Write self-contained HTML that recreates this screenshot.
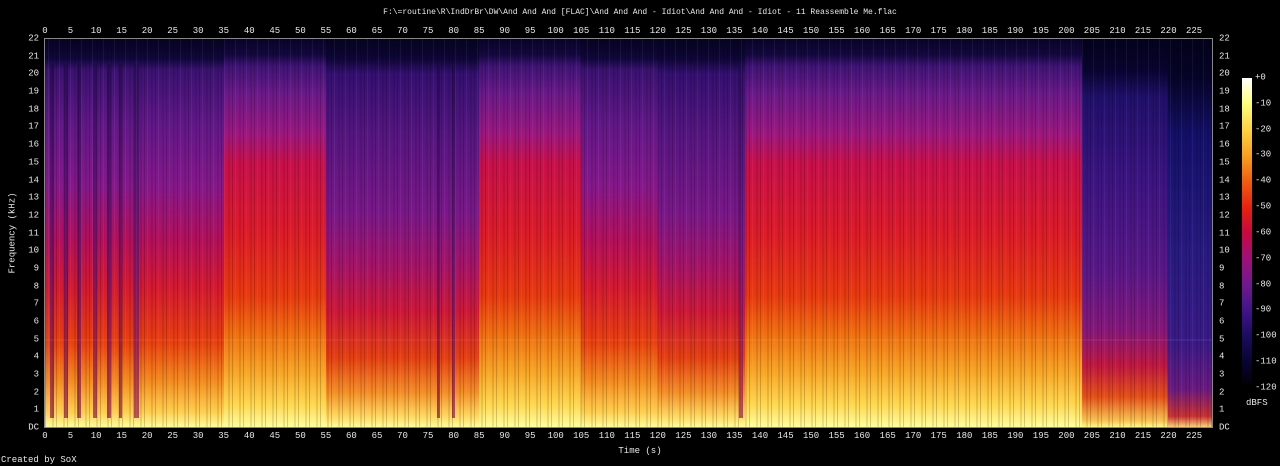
<!DOCTYPE html>
<html><head><meta charset="utf-8"><style>
html,body{margin:0;padding:0;background:#000;width:1280px;height:466px;overflow:hidden;position:relative;font-family:"Liberation Mono",monospace;color:#e8e8e8}
.t{position:absolute;font-size:9px;line-height:9px;white-space:nowrap}
.tt span{position:absolute;top:27px;transform:translateX(-50%);font-size:9px;line-height:9px}
.tb span{position:absolute;top:432px;transform:translateX(-50%);font-size:9px;line-height:9px}
.fl span{position:absolute;right:1241px;transform:translateY(-50%);font-size:9px;line-height:9px}
.fr span{position:absolute;left:1219px;transform:translateY(-50%);font-size:9px;line-height:9px}
#plot{position:absolute;left:45px;top:39px;width:1168px;height:389px;overflow:hidden;background:#0a0530}
.s{position:absolute;top:0;height:389px}
.L{background:linear-gradient(to bottom,#080428 0%,#14083f 4%,#3f1475 7%,#6a1a88 14%,#9a1880 24%,#c8104a 32%,#dc1c28 50%,#e83a10 66%,#f07010 76%,#f8a828 86%,#ffd850 94%,#ffffa0 100%)}
.M{background:linear-gradient(to bottom,#060320 0%,#10073a 5%,#3a1270 8%,#621888 22%,#86188a 38%,#b4105a 52%,#d41a30 64%,#e8400f 78%,#f48c20 88%,#ffd050 96%,#ffffa0 100%)}
.Q{background:linear-gradient(to bottom,#050320 0%,#0e0636 5%,#341070 9%,#561680 25%,#7a1888 45%,#a41468 58%,#cc1838 70%,#e44012 82%,#f49028 91%,#ffd860 97%,#ffffa0 100%)}
.F{background:linear-gradient(to bottom,#04021a 0%,#080430 8%,#20106a 15%,#3a1480 35%,#5a1888 60%,#86187a 75%,#c01840 84%,#e45018 92%,#f8c050 98%,#ffff90 100%)}
.E{background:linear-gradient(to bottom,#03021a 0%,#060428 10%,#14106a 25%,#281a80 55%,#3a1a86 78%,#6a1a80 90%,#c83030 97%,#ffe080 100%)}
#tex{position:absolute;inset:0;background:repeating-linear-gradient(90deg,rgba(0,0,0,.18) 0 1px,transparent 1px 3px,rgba(255,255,255,.05) 3px 4px,transparent 4px 7px,rgba(0,0,0,.1) 7px 9px,transparent 9px 11px)}
#tex2{position:absolute;inset:0;background:repeating-linear-gradient(to bottom,transparent 0 300px,rgba(255,255,255,.05) 300px 302px,transparent 302px 318px)}
.d{position:absolute;top:25px;bottom:10px;background:linear-gradient(to bottom,rgba(30,8,70,.6),rgba(90,20,110,.7) 60%,rgba(150,20,80,.7));}
#cb{position:absolute;left:1242px;top:78px;width:10px;height:310px;background:linear-gradient(to bottom,#ffffff 0%,#ffff80 8%,#ffd040 17%,#f8a020 25%,#f06010 33%,#e82010 42%,#c80840 50%,#a0107a 58%,#701890 67%,#40148a 75%,#1c0c60 83%,#080430 92%,#000 100%)}
.cl span{position:absolute;left:1255px;transform:translateY(-50%);font-size:9px;line-height:9px}
</style></head><body>
<div class="t" style="left:0;width:1280px;text-align:center;top:8px;font-size:8px">F:\=routine\R\IndDrBr\DW\And And And [FLAC]\And And And - Idiot\And And And - Idiot - 11 Reassemble Me.flac</div>
<div id="plot">
<div class="s M" style="left:0;width:102px"></div>
<div class="s M" style="left:102px;width:77px"></div>
<div class="s L" style="left:179px;width:102px"></div>
<div class="s Q" style="left:281px;width:153px"></div>
<div class="s L" style="left:434px;width:102px"></div>
<div class="s M" style="left:536px;width:77px"></div>
<div class="s Q" style="left:613px;width:87px"></div>
<div class="s L" style="left:700px;width:337px"></div>
<div class="s F" style="left:1037px;width:86px"></div>
<div class="s E" style="left:1123px;width:45px"></div>
<div class="d" style="left:5px;width:4px"></div><div class="d" style="left:19px;width:4px"></div><div class="d" style="left:32px;width:4px"></div><div class="d" style="left:48px;width:4px"></div><div class="d" style="left:62px;width:4px"></div><div class="d" style="left:74px;width:3px"></div><div class="d" style="left:89px;width:5px"></div>
<div class="d" style="left:392px;width:3px"></div><div class="d" style="left:407px;width:3px"></div><div class="d" style="left:694px;width:4px"></div>
<div id="tex"></div><div id="tex2"></div>
</div>
<div style="position:absolute;left:44px;top:38px;width:1169px;height:390px;border:1px solid #888;box-sizing:border-box"></div>
<div class="tt"><span style="left:45px">0</span><span style="left:70.5px">5</span><span style="left:96.1px">10</span><span style="left:121.6px">15</span><span style="left:147.1px">20</span><span style="left:172.7px">25</span><span style="left:198.2px">30</span><span style="left:223.7px">35</span><span style="left:249.3px">40</span><span style="left:274.8px">45</span><span style="left:300.4px">50</span><span style="left:325.9px">55</span><span style="left:351.4px">60</span><span style="left:377px">65</span><span style="left:402.5px">70</span><span style="left:428px">75</span><span style="left:453.6px">80</span><span style="left:479.1px">85</span><span style="left:504.6px">90</span><span style="left:530.2px">95</span><span style="left:555.7px">100</span><span style="left:581.2px">105</span><span style="left:606.8px">110</span><span style="left:632.3px">115</span><span style="left:657.8px">120</span><span style="left:683.4px">125</span><span style="left:708.9px">130</span><span style="left:734.4px">135</span><span style="left:760px">140</span><span style="left:785.5px">145</span><span style="left:811.1px">150</span><span style="left:836.6px">155</span><span style="left:862.1px">160</span><span style="left:887.7px">165</span><span style="left:913.2px">170</span><span style="left:938.7px">175</span><span style="left:964.3px">180</span><span style="left:989.8px">185</span><span style="left:1015.3px">190</span><span style="left:1040.9px">195</span><span style="left:1066.4px">200</span><span style="left:1091.9px">205</span><span style="left:1117.5px">210</span><span style="left:1143px">215</span><span style="left:1168.5px">220</span><span style="left:1194.1px">225</span></div>
<div class="tb"><span style="left:45px">0</span><span style="left:70.5px">5</span><span style="left:96.1px">10</span><span style="left:121.6px">15</span><span style="left:147.1px">20</span><span style="left:172.7px">25</span><span style="left:198.2px">30</span><span style="left:223.7px">35</span><span style="left:249.3px">40</span><span style="left:274.8px">45</span><span style="left:300.4px">50</span><span style="left:325.9px">55</span><span style="left:351.4px">60</span><span style="left:377px">65</span><span style="left:402.5px">70</span><span style="left:428px">75</span><span style="left:453.6px">80</span><span style="left:479.1px">85</span><span style="left:504.6px">90</span><span style="left:530.2px">95</span><span style="left:555.7px">100</span><span style="left:581.2px">105</span><span style="left:606.8px">110</span><span style="left:632.3px">115</span><span style="left:657.8px">120</span><span style="left:683.4px">125</span><span style="left:708.9px">130</span><span style="left:734.4px">135</span><span style="left:760px">140</span><span style="left:785.5px">145</span><span style="left:811.1px">150</span><span style="left:836.6px">155</span><span style="left:862.1px">160</span><span style="left:887.7px">165</span><span style="left:913.2px">170</span><span style="left:938.7px">175</span><span style="left:964.3px">180</span><span style="left:989.8px">185</span><span style="left:1015.3px">190</span><span style="left:1040.9px">195</span><span style="left:1066.4px">200</span><span style="left:1091.9px">205</span><span style="left:1117.5px">210</span><span style="left:1143px">215</span><span style="left:1168.5px">220</span><span style="left:1194.1px">225</span></div>
<div class="t" style="left:0;width:1280px;text-align:center;top:447px">Time (s)</div>
<div class="fl"><span style="top:428px">DC</span><span style="top:410.3px">1</span><span style="top:392.6px">2</span><span style="top:375px">3</span><span style="top:357.3px">4</span><span style="top:339.6px">5</span><span style="top:321.9px">6</span><span style="top:304.2px">7</span><span style="top:286.6px">8</span><span style="top:268.9px">9</span><span style="top:251.2px">10</span><span style="top:233.5px">11</span><span style="top:215.8px">12</span><span style="top:198.2px">13</span><span style="top:180.5px">14</span><span style="top:162.8px">15</span><span style="top:145.1px">16</span><span style="top:127.4px">17</span><span style="top:109.8px">18</span><span style="top:92.1px">19</span><span style="top:74.4px">20</span><span style="top:56.7px">21</span><span style="top:39px">22</span></div>
<div class="fr"><span style="top:428px">DC</span><span style="top:410.3px">1</span><span style="top:392.6px">2</span><span style="top:375px">3</span><span style="top:357.3px">4</span><span style="top:339.6px">5</span><span style="top:321.9px">6</span><span style="top:304.2px">7</span><span style="top:286.6px">8</span><span style="top:268.9px">9</span><span style="top:251.2px">10</span><span style="top:233.5px">11</span><span style="top:215.8px">12</span><span style="top:198.2px">13</span><span style="top:180.5px">14</span><span style="top:162.8px">15</span><span style="top:145.1px">16</span><span style="top:127.4px">17</span><span style="top:109.8px">18</span><span style="top:92.1px">19</span><span style="top:74.4px">20</span><span style="top:56.7px">21</span><span style="top:39px">22</span></div>
<div class="t" style="left:13px;top:233px;transform:translate(-50%,-50%) rotate(-90deg);transform-origin:center">Frequency (kHz)</div>
<div id="cb"></div>
<div class="cl"><span style="top:78px">+0</span><span style="top:104px">-10</span><span style="top:130px">-20</span><span style="top:155px">-30</span><span style="top:181px">-40</span><span style="top:207px">-50</span><span style="top:233px">-60</span><span style="top:259px">-70</span><span style="top:285px">-80</span><span style="top:310px">-90</span><span style="top:336px">-100</span><span style="top:362px">-110</span><span style="top:388px">-120</span></div>
<div class="t" style="left:1246px;top:399px">dBFS</div>
<div class="t" style="left:1px;top:456px">Created by SoX</div>
</body></html>
